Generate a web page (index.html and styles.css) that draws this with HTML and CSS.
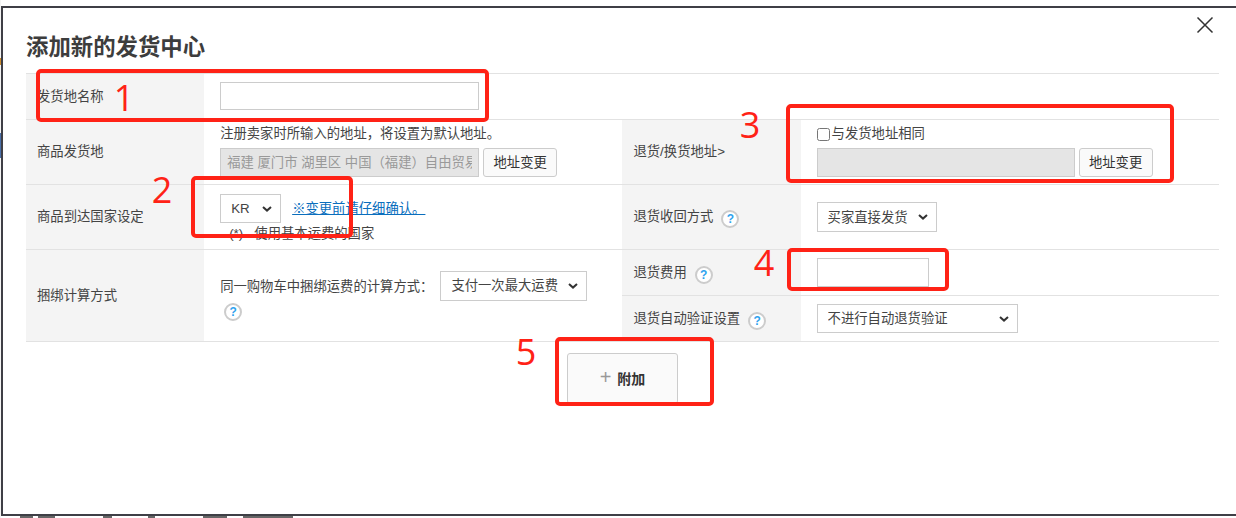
FILE: index.html
```html
<!DOCTYPE html>
<html lang="zh-CN">
<head>
  <meta charset="UTF-8">
  <title>添加新的发货中心</title>
  <link rel="stylesheet" href="styles.css">
</head>
<body>

  <div class="page-edge">
    <span class="edge-orange"></span>
    <span class="edge-blue"></span>
  </div>

  <div class="modal">
    <h1 class="modal-title">添加新的发货中心</h1>

    <table class="form-table">
      <colgroup>
        <col class="col-label">
        <col class="col-field">
        <col class="col-label">
        <col class="col-field">
      </colgroup>
      <tr class="row-name">
        <th>发货地名称</th>
        <td colspan="3"><input type="text" class="input-name"></td>
      </tr>
      <tr class="row-address">
        <th>商品发货地</th>
        <td class="top-cell">
          <div class="cell-text">注册卖家时所输入的地址，将设置为默认地址。</div>
          <div class="address-line">
            <input type="text" class="input-address" value="福建 厦门市 湖里区 中国（福建）自由贸易试验区" disabled>
            <button class="btn-address">地址变更</button>
          </div>
        </td>
        <th>退货/换货地址&gt;</th>
        <td class="top-cell">
          <label class="cell-text same-check"><input type="checkbox">与发货地址相同</label>
          <div class="address-line return-line">
            <input type="text" class="input-address" disabled>
            <button class="btn-address">地址变更</button>
          </div>
        </td>
      </tr>
      <tr class="row-country">
        <th>商品到达国家设定</th>
        <td class="country-cell">
          <div class="country-line">
            <select class="select-country"><option>KR</option></select>
            <a href="#" class="confirm-link">※变更前请仔细确认。</a>
          </div>
          <div class="country-note">(*) &nbsp;&nbsp;使用基本运费的国家</div>
        </td>
        <th class="with-help">退货收回方式<span class="help">?</span></th>
        <td><select class="select-return"><option>买家直接发货</option></select></td>
      </tr>
      <tr class="row-half">
        <th rowspan="2">捆绑计算方式</th>
        <td rowspan="2">
          <div class="bundle-line">
            同一购物车中捆绑运费的计算方式：
            <select class="select-bundle"><option>支付一次最大运费</option></select>
          </div>
          <span class="help help-bundle">?</span>
        </td>
        <th class="with-help">退货费用<span class="help">?</span></th>
        <td><input type="text" class="input-fee"></td>
      </tr>
      <tr class="row-half">
        <th class="with-help">退货自动验证设置<span class="help">?</span></th>
        <td><select class="select-auto"><option>不进行自动退货验证</option></select></td>
      </tr>
    </table>

    <div class="actions">
      <button class="btn-add"><span class="plus">+</span>附加</button>
    </div>
  </div>

  <div class="page-behind">
    <span class="b1"></span><span class="b2"></span><span class="b3"></span><span class="b4"></span><span class="b5"></span><span class="b6"></span>
  </div>

  <svg class="close-x" width="18" height="18" viewBox="0 0 18 18">
    <path d="M1.5 1.5 L16.5 16.5 M16.5 1.5 L1.5 16.5" stroke="#333" stroke-width="1.5" fill="none"/>
  </svg>

  <!-- red marks drawn over the screenshot -->
  <div class="mark mark-1"></div>
  <div class="mark mark-2"></div>
  <div class="mark mark-3"></div>
  <div class="mark mark-4"></div>
  <div class="mark mark-5"></div>
  <div class="num num-1">1</div>
  <div class="num num-2">2</div>
  <div class="num num-3">3</div>
  <div class="num num-4">4</div>
  <div class="num num-5">5</div>

</body>
</html>
```

FILE: styles.css
```css
* {
  box-sizing: border-box;
}

body {
  margin: 0;
  height: 518px;
  overflow: hidden;
  position: relative;
  background: #fff;
  color: #444;
  font-family: "Liberation Sans", "Noto Sans CJK SC", sans-serif;
  font-size: 13.33px;
}

.page-edge {
  position: absolute;
  left: 0;
  top: 0;
  width: 1px;
  height: 518px;
  background: #f4f4f4;
}

.edge-orange {
  position: absolute;
  top: 58px;
  left: 0;
  width: 1px;
  height: 7px;
  background: #c98a2c;
}

.edge-blue {
  position: absolute;
  top: 133px;
  left: 0;
  width: 1px;
  height: 25px;
  background: #4a6fa8;
}

.modal {
  margin: 6px 0 0 1px;
  height: 510px;
  background: #fff;
  border: 2px solid #3f3f46;
  border-right: 0;
  padding: 0 17px 0 23px;
}

.modal-title {
  margin: 25px 0 10px;
  font-size: 22.4px;
  line-height: 30px;
  font-weight: 700;
  color: #3d3d3d;
}

.form-table {
  width: 1193px;
  border-collapse: collapse;
  table-layout: fixed;
}

.col-label { width: 178px; }
.col-field { width: 418px; }

.form-table th,
.form-table td {
  border-top: 1px solid #e2e2e2;
  border-bottom: 1px solid #e2e2e2;
  padding: 0;
  font-weight: 400;
  text-align: left;
}

.form-table th {
  background: #f4f4f4;
  padding: 0 0 3px 11px;
}

.form-table th.with-help {
  padding-bottom: 0;
}

.form-table td {
  padding-left: 16px;
}

.row-name { height: 46px; }
.row-address { height: 65px; }
.row-country { height: 65px; }
.row-half { height: 46px; }

.row-name td {
  padding-bottom: 1px;
}

.form-table .top-cell {
  vertical-align: top;
  padding-top: 5px;
}

.form-table .country-cell {
  vertical-align: top;
  padding-top: 9px;
}

input[type="text"],
select {
  border: 1px solid #ccc;
  border-radius: 0;
  background: #fff;
  color: #444;
  font: inherit;
  margin: 0;
}

select {
  appearance: none;
  padding-left: 10px;
  background: #fff url("data:image/svg+xml,%3Csvg xmlns='http://www.w3.org/2000/svg' width='10' height='6'%3E%3Cpath d='M1 1l4 3.6L9 1' fill='none' stroke='%23333' stroke-width='2'/%3E%3C/svg%3E") no-repeat right 8px center;
}

.input-name {
  display: block;
  width: 259px;
  height: 28px;
}

.cell-text {
  display: block;
  height: 18px;
  line-height: 18px;
  margin-bottom: 5px;
}

.same-check {
  display: flex;
  align-items: center;
}

.same-check input {
  margin: 0 2px 0 0;
  width: 13px;
  height: 13px;
}

.address-line {
  display: flex;
  gap: 4px;
}

.input-address {
  width: 259px;
  height: 29px;
  padding: 0 6px 2px;
}

.return-line .input-address {
  width: 258px;
}

.input-address:disabled {
  background: #e5e5e5;
  color: #999;
}

.btn-address {
  width: 74px;
  height: 29px;
  padding: 0 0 3px;
  border: 1px solid #ccc;
  border-radius: 3px;
  background: #fafafa;
  color: #333;
  font: inherit;
}

.country-line {
  display: flex;
  align-items: center;
  gap: 11px;
}

.select-country {
  width: 61px;
  height: 29px;
}

.confirm-link {
  color: #0a6ebd;
  margin-bottom: 2px;
}

.country-note {
  margin: 2px 0 0 9px;
  line-height: 18px;
}

.select-return {
  display: block;
  width: 120px;
  height: 30px;
}

.input-fee {
  display: block;
  width: 112px;
  height: 29px;
}

.select-auto {
  display: block;
  width: 201px;
  height: 29px;
}

.bundle-line {
  display: flex;
  align-items: center;
  justify-content: flex-start;
}

.select-bundle {
  width: 147px;
  height: 30px;
  margin-left: 7px;
}

.help {
  display: inline-block;
  width: 18px;
  height: 18px;
  margin-left: 8px;
  border: 2px solid #ccc;
  border-radius: 50%;
  background: #fff;
  color: #2fa3ee;
  font-size: 12px;
  font-weight: 700;
  line-height: 14px;
  text-align: center;
  vertical-align: -2px;
}

.help-bundle {
  display: block;
  margin: 2px 0 0 4px;
}

.actions {
  display: flex;
  justify-content: center;
  margin-top: 11px;
}

.btn-add {
  width: 111px;
  height: 51px;
  padding: 0 0 2px;
  border: 1px solid #ccc;
  border-radius: 3px;
  background: #fafafa;
  color: #333;
  font: inherit;
  font-size: 14px;
  font-weight: 700;
}

.plus {
  margin-right: 6px;
  color: #999;
  font-size: 20px;
  line-height: 14px;
  font-weight: 400;
}

.page-behind {
  position: absolute;
  left: 0;
  top: 516px;
  width: 320px;
  height: 2px;
  display: flex;
}

.page-behind span {
  display: block;
  height: 2px;
  background: #666;
}

.b1 { width: 13px; margin-left: 20px; }
.b2 { width: 17px; margin-left: 5px; }
.b3 { width: 9px; margin-left: 48px; }
.b4 { width: 7px; margin-left: 36px; }
.b5 { width: 24px; margin-left: 48px; }
.b6 { width: 50px; margin-left: 16px; }

.close-x {
  position: absolute;
  left: 1196px;
  top: 16px;
}

.mark {
  position: absolute;
  border: 4px solid #ff2216;
  border-radius: 5px;
}

.mark-1 { left: 36px; top: 69px; width: 453px; height: 53px; }
.mark-2 { left: 191px; top: 176px; width: 162px; height: 62px; }
.mark-3 { left: 786px; top: 104px; width: 388px; height: 79px; }
.mark-4 { left: 787px; top: 248px; width: 162px; height: 43px; }
.mark-5 { left: 555px; top: 337px; width: 159px; height: 69px; }

.num {
  position: absolute;
  transform: translate(-50%, -50%);
  color: #ff2216;
  font-family: "Open Sans", sans-serif;
  font-size: 36px;
  line-height: 40px;
}

.num-1 { left: 124px; top: 98px; }
.num-2 { left: 162px; top: 190px; }
.num-3 { left: 750px; top: 125px; }
.num-4 { left: 764px; top: 263px; }
.num-5 { left: 526px; top: 352px; }
```
